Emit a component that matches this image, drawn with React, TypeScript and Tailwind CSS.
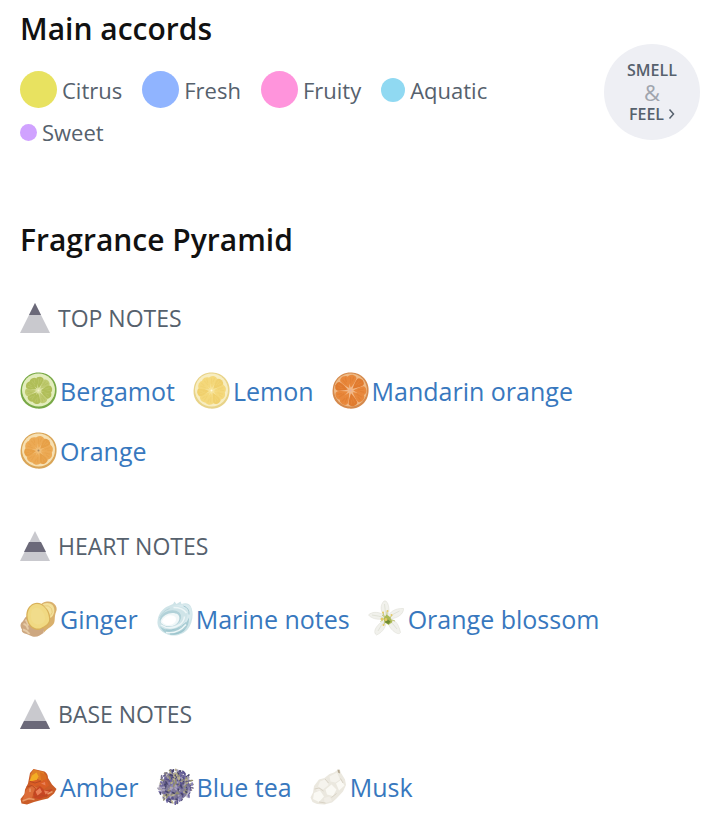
import type { ReactNode } from 'react';

type CitrusProps = {
  rind: string;
  pith: string;
  flesh: string;
  shade: string;
  vein: string;
  core: string;
  segments?: number;
  fleshSize?: number;
};

const iconClass = 'h-[37px] w-[37px] shrink-0';

function CitrusSlice({ rind, pith, flesh, shade, vein, core, segments = 10, fleshSize = 1 }: CitrusProps) {
  const step = 360 / segments;
  return (
    <svg viewBox="0 0 74 74" className={iconClass} aria-hidden="true">
      <path
        d="M37 1 C47 0 57 5 64 12 C72 21 74 31 73 40 C72 51 67 61 58 67 C50 73 41 74 32 73 C21 71 12 66 6 57 C1 49 0 39 2 30 C4 19 11 10 20 5 C26 2 31 1 37 1Z"
        fill={rind}
      />
      <circle cx="37" cy="36" r="33" fill={pith} />
      <g transform={`translate(37 37) scale(${fleshSize}) translate(-37 -37)`}>
        <circle cx="37" cy="37" r="27" fill={vein} />
        {Array.from({ length: segments }, (_, i) => (
          <g key={i} transform={`rotate(${i * step + 7 + (i % 3) * 2} 37 37)`}>
            <path
              d="M37 32 C34 27 30 20 29 14 Q29 9 37 8 Q45 9 45 14 C44 20 40 27 37 32Z"
              fill={i % 3 === 1 ? shade : flesh}
            />
            <path
              d="M34 13 L36 24 M40 12 L38 20"
              stroke={i % 3 === 1 ? flesh : shade}
              strokeWidth="2"
              opacity="0.6"
            />
          </g>
        ))}
      </g>
      <circle cx="37" cy="37" r="4" fill={vein} />
      <circle cx="37" cy="37" r="2" fill={core} />
    </svg>
  );
}

function GingerIcon() {
  return (
    <svg viewBox="0 0 74 74" className={iconClass} aria-hidden="true">
      <path d="M15 32 C8 34 9 41 3 45 C-1 51 2 55 4 59 C2 64 7 67 13 68 L25 73 C35 75 41 70 47 66 L50 48Z" fill="#cda780" />
      <path d="M7 48 Q15 50 16 59 M6 59 Q14 61 19 68 M11 39 Q14 43 17 51" fill="none" stroke="#e6cba6" strokeWidth="4" />
      <path d="M41 11 C44 3 58 1 65 5 C73 10 75 17 72 24 C68 34 71 43 67 48 C62 55 54 57 48 65 L44 32Z" fill="#d9b06c" />
      <path d="M43 11 C49 4 60 5 65 10 C72 18 68 32 61 36 C56 29 53 21 43 11Z" fill="#f3e09a" />
      <path d="M48 12 Q57 9 63 17 Q67 25 61 31" fill="none" stroke="#e3c373" strokeWidth="1.5" />
      <path d="M21 11 C29 3 43 4 50 14 C59 21 62 34 60 43 C58 52 50 54 43 58 C32 64 18 55 15 43 C10 31 13 17 21 11Z" fill="#d9b159" />
      <path d="M23 12 C31 6 43 7 50 16 C57 24 59 36 58 42 C55 50 48 52 42 56 C32 60 20 53 17 42 C13 30 16 18 23 12Z" fill="#f0d983" />
      <path d="M24 20 C35 9 46 21 49 31 C53 44 44 48 35 49 C20 47 20 30 24 20Z" fill="#f1dc8b" />
    </svg>
  );
}

function MarineIcon() {
  return (
    <svg viewBox="0 0 74 74" className={iconClass} aria-hidden="true">
      <path
        d="M3 43 C4 29 12 17 25 12 L34 8 L37 3 L41 8 L49 3 L51 8 C60 5 68 7 71 16 C76 29 72 48 64 58 C54 70 36 75 21 68 C9 63 2 54 3 43Z"
        fill="#cfe4e8"
      />
      <path d="M27 13 Q52 10 62 20 Q66 34 55 47 L63 50 Q76 34 70 15 Q65 6 51 9Z" fill="#d9eaee" />
      <path d="M7 52 Q24 66 49 55 Q60 49 66 35 Q67 51 56 62 Q35 77 14 62Z" fill="#a9cdd4" />
      <ellipse cx="29" cy="37" rx="22" ry="16" fill="#b1d1d8" transform="rotate(-18 29 37)" />
      <path d="M9 42 C14 27 34 22 44 29 C51 37 44 49 33 52 C20 54 9 50 9 42Z" fill="#f0f7f8" />
      <path d="M12 42 C18 29 34 27 39 35 C43 43 34 50 24 50 C17 49 13 46 12 42Z" fill="#ffffff" />
      <path d="M10 50 Q28 62 48 49 Q56 43 57 33 M20 65 Q43 69 60 49 M35 15 Q54 15 61 26" fill="none" stroke="#edf6f7" strokeWidth="3" />
      <path d="M20 60 Q43 62 60 45 M28 68 Q44 70 57 59 M55 12 Q67 16 66 29" fill="none" stroke="#93bfc8" strokeWidth="1.5" />
      <path d="M7 36 Q13 22 27 17" fill="none" stroke="#b3d1d8" strokeWidth="1.5" />
    </svg>
  );
}

function BlossomIcon() {
  return (
    <svg viewBox="0 0 74 74" className={iconClass} aria-hidden="true">
      <g stroke="#dadbd1" strokeWidth="1" fill="#f1f1ec">
        <path d="M34 33 C25 24 23 11 32 2 Q36 0 39 6 C44 17 42 27 38 35Z" />
        <path d="M40 34 C43 24 54 16 71 17 C72 27 60 37 43 38Z" />
        <path d="M38 37 C51 36 61 45 65 65 C61 72 46 61 41 49Z" />
        <path d="M36 39 C38 51 30 65 17 70 C10 66 13 53 30 42Z" />
        <path d="M35 36 C26 40 10 40 1 30 C8 22 25 23 36 33Z" />
      </g>
      <path d="M33 8 Q34 19 36 30 M63 22 Q51 27 43 34 M58 58 Q49 45 42 42 M20 62 Q26 50 34 42 M8 30 Q22 32 32 35" fill="none" stroke="#e1e3d8" strokeWidth="2" />
      <path d="M31 39 L25 43 M34 43 L31 51 M43 39 L54 42 M44 36 L48 30 M34 34 L28 30 M38 33 L38 23 M33 35 L30 25" stroke="#c1c57b" strokeWidth="2" />
      <path d="M31 37 L37 29 L44 34 L49 44 L41 50 L33 44Z" fill="#abb953" />
      <path d="M37 37 L45 43 L41 48 L34 45Z" fill="#6f8a32" />
      <g fill="#e6ca66">
        <circle cx="30" cy="25" r="2" />
        <circle cx="39" cy="22" r="2" />
        <circle cx="28" cy="38" r="3" />
        <circle cx="36" cy="39" r="3" />
        <circle cx="47" cy="30" r="2" />
        <circle cx="31" cy="50" r="2" />
      </g>
    </svg>
  );
}

function AmberIcon() {
  return (
    <svg viewBox="0 0 74 74" className={iconClass} aria-hidden="true">
      <path
        d="M27 2 L49 7 Q56 11 56 20 L64 33 L73 42 L68 51 L56 61 L43 64 L28 68 L14 73 L3 71 L1 62 L9 52 L10 43 L16 31 L20 10Z"
        fill="#ca5c27"
      />
      <path d="M27 3 L47 8 L52 18 L45 26 L29 20 L20 27 L21 13Z" fill="#e08026" />
      <path d="M24 15 L33 9 L37 17 L31 29 L19 26Z" fill="#f3ad24" />
      <path d="M40 8 L52 14 L54 24 L42 24Z" fill="#d96d20" />
      <path d="M18 28 L32 24 L43 26 L53 22 L58 35 L48 42 L37 34 L25 39Z" fill="#d95d25" />
      <path d="M12 44 L25 35 L35 39 L27 51 L22 64 L5 64Z" fill="#dc6d38" />
      <path d="M27 48 L40 36 L49 45 L65 42 L57 55 L39 62 L27 60Z" fill="#c84522" />
      <path d="M31 47 L40 40 L44 48 L35 55Z M48 45 L58 47 L51 53Z M42 31 L50 28 L51 35Z" fill="#e98058" />
      <path d="M20 27 L30 30 L42 26 M13 38 L24 35 L31 41 L28 54 M30 58 L43 54 L54 57" fill="none" stroke="#b94a22" strokeWidth="2" />
      <path d="M5 66 L18 61 L29 63 M20 41 L20 48 M55 52 L65 47" fill="none" stroke="#e99a69" strokeWidth="3" />
    </svg>
  );
}

const petalColors = ['#58518c', '#8982b8', '#47446d', '#6c649f', '#b9b18e', '#77708f', '#a9a2bd', '#918e70'];

// fixed sequence, so that the heap of petals is the same on each render
const scatter = (n: number) => {
  const value = Math.sin(n * 12.9898) * 43758.5453;
  return value - Math.floor(value);
};

const petals = Array.from({ length: 260 }, (_, i) => {
  const radius = 34 * Math.sqrt(scatter(i + 1));
  const angle = scatter(i + 301) * Math.PI * 2;
  return {
    x: 37 + radius * Math.cos(angle),
    y: 37 + radius * Math.sin(angle),
    turn: scatter(i + 601) * 180,
    length: 2 + scatter(i + 901) * 3,
    color: petalColors[Math.floor(scatter(i + 1201) * petalColors.length)],
  };
});

function BlueTeaIcon() {
  return (
    <svg viewBox="0 0 74 74" className={iconClass} aria-hidden="true">
      <circle cx="37" cy="37" r="28" fill="#817b9b" />
      {petals.map((p, i) => (
        <ellipse
          key={i}
          cx={p.x}
          cy={p.y}
          rx={p.length}
          ry="1.8"
          fill={p.color}
          transform={`rotate(${p.turn} ${p.x} ${p.y})`}
        />
      ))}
    </svg>
  );
}

function MuskIcon() {
  return (
    <svg viewBox="0 0 74 74" className={iconClass} aria-hidden="true">
      <path
        d="M55 4 L59 2 L62 10 L70 23 L72 34 L66 47 L53 61 L44 69 L29 73 L14 72 L5 68 L1 59 L6 49 L8 36 L18 23 L29 20 L39 12 L48 9Z"
        fill="#ebe8df"
      />
      <path d="M39 17 L54 9 L60 23 L51 29 L41 27Z M20 27 L32 22 L37 34 L26 43 L16 37Z" fill="#f5f3ed" />
      <path d="M52 31 L62 24 L69 35 L58 45Z M31 43 L43 33 L53 43 L46 56 L34 53Z M8 50 L20 45 L28 57 L18 68 L6 62Z" fill="#faf9f4" />
      <path d="M28 60 L39 57 L44 66 L29 70Z M11 40 L18 38 L22 44 L14 46Z" fill="#f1eee7" />
      <path d="M9 42 L18 40 L27 46 M30 22 L37 30 M43 59 L53 51 M18 68 L31 70 M61 21 L66 30" fill="none" stroke="#d9d3c6" strokeWidth="2" />
      <path d="M55 3 L59 4 L60 11 L56 9Z" fill="#b3a68f" />
    </svg>
  );
}

type Level = 'top' | 'heart' | 'base';

const pyramidBands: Record<Level, string> = {
  top: 'M15 0 L21 12 H9Z',
  heart: 'M9 11 H21 L26 21 H4Z',
  base: 'M4 22 H26 L30 30 H0Z',
};

function PyramidIcon({ level }: { level: Level }) {
  return (
    <svg viewBox="0 0 30 30" className="h-[30px] w-[30px] shrink-0" aria-hidden="true">
      <path d="M15 0 L30 30 H0Z" fill="#c9c9ce" />
      <path d={pyramidBands[level]} fill="#6b6979" />
    </svg>
  );
}

const accords = [
  { name: 'Citrus', dot: 'h-[37px] w-[37px] bg-[#e8e260]' },
  { name: 'Fresh', dot: 'h-[37px] w-[37px] bg-[#90b4ff]' },
  { name: 'Fruity', dot: 'h-[37px] w-[37px] bg-[#ff94dc]' },
  { name: 'Aquatic', dot: 'h-6 w-6 bg-[#90d9f2]' },
  { name: 'Sweet', dot: 'h-[17px] w-[17px] bg-[#d0a2ff]' },
];

const pyramid: { level: Level; title: string; notes: { name: string; icon: ReactNode }[] }[] = [
  {
    level: 'top',
    title: 'TOP NOTES',
    notes: [
      {
        name: 'Bergamot',
        icon: (
          <CitrusSlice rind="#78a946" pith="#e3edbd" flesh="#b0be58" shade="#bfca70" vein="#dee4a8" core="#f5efc8" fleshSize={0.95} />
        ),
      },
      {
        name: 'Lemon',
        icon: <CitrusSlice rind="#e8d388" pith="#f7edc1" flesh="#f4d87b" shade="#f0d06d" vein="#f7e39a" core="#fff9df" />,
      },
      {
        name: 'Mandarin orange',
        icon: (
          <CitrusSlice rind="#d5894c" pith="#eebb87" flesh="#e8883c" shade="#e07b2f" vein="#f2b988" core="#e5b0a0" segments={9} fleshSize={1.1} />
        ),
      },
      {
        name: 'Orange',
        icon: <CitrusSlice rind="#d9a557" pith="#f6e0b2" flesh="#ecaa55" shade="#e7a047" vein="#f1be77" core="#a98861" />,
      },
    ],
  },
  {
    level: 'heart',
    title: 'HEART NOTES',
    notes: [
      { name: 'Ginger', icon: <GingerIcon /> },
      { name: 'Marine notes', icon: <MarineIcon /> },
      { name: 'Orange blossom', icon: <BlossomIcon /> },
    ],
  },
  {
    level: 'base',
    title: 'BASE NOTES',
    notes: [
      { name: 'Amber', icon: <AmberIcon /> },
      { name: 'Blue tea', icon: <BlueTeaIcon /> },
      { name: 'Musk', icon: <MuskIcon /> },
    ],
  },
];

export default function App() {
  return (
    <main className="bg-white px-5 pt-[11px] font-['Open_Sans',sans-serif] text-[#56616d]">
      {/* Main accords */}
      <section className="flex items-start gap-6">
        <div className="flex-1">
          <h2 className="text-[30px] leading-9 font-semibold text-[#111]">Main accords</h2>
          <ul className="mt-6 flex flex-wrap gap-x-5 gap-y-2">
            {accords.map((accord) => (
              <li key={accord.name} className="flex items-center gap-[5px] text-[22px] leading-8">
                <span className={`shrink-0 rounded-full ${accord.dot}`} />
                {accord.name}
              </li>
            ))}
          </ul>
        </div>
        <button
          type="button"
          className="mt-[33px] flex h-24 w-24 shrink-0 cursor-pointer flex-col items-center justify-center rounded-full bg-[#eeeff4] text-base leading-[22px] font-semibold"
        >
          <span>SMELL</span>
          <span className="text-[22px] leading-[22px] font-normal text-[#a0a5ae]">&amp;</span>
          <span className="flex items-center gap-1">
            FEEL
            <svg viewBox="0 0 7 12" className="h-3 w-[7px]" fill="none" stroke="currentColor" strokeWidth="1.5" aria-hidden="true">
              <path d="M1.5 1.5 L5.5 6 L1.5 10.5" />
            </svg>
          </span>
        </button>
      </section>

      {/* Fragrance Pyramid */}
      <section className="mt-[74px]">
        <h2 className="text-[30px] leading-9 font-semibold text-[#111]">Fragrance Pyramid</h2>
        <div className="mt-[42px] flex flex-col gap-[59px]">
          {pyramid.map((group) => (
            <section key={group.level}>
              <h3 className="flex items-center gap-2 text-[23px] leading-9">
                <PyramidIcon level={group.level} />
                {group.title}
              </h3>
              <ul className="mt-9 flex flex-wrap gap-x-[18px] gap-y-[23px]">
                {group.notes.map((note) => (
                  <li key={note.name}>
                    <a href="#" className="flex items-center gap-[3px] text-[25px] leading-9 text-[#3878be]">
                      {note.icon}
                      {note.name}
                    </a>
                  </li>
                ))}
              </ul>
            </section>
          ))}
        </div>
      </section>
    </main>
  );
}
